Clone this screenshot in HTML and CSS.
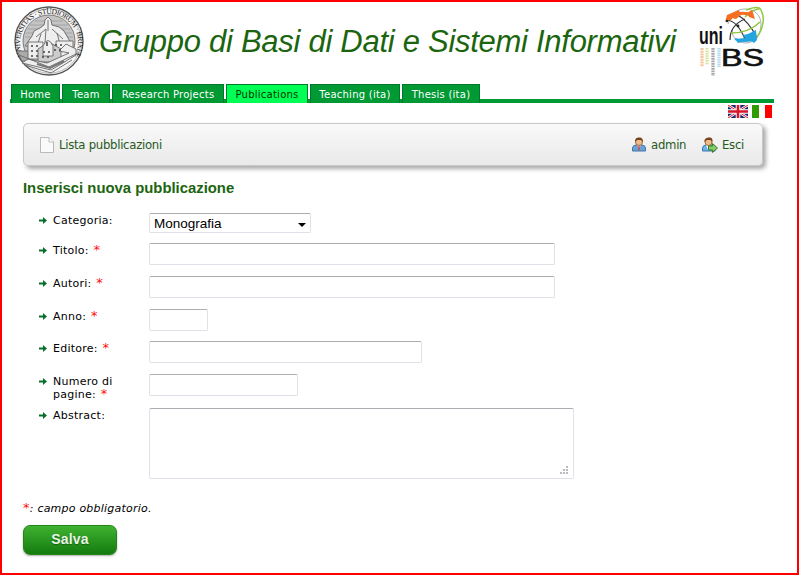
FILE: index.html
```html
<!DOCTYPE html>
<html lang="it">
<head>
<meta charset="utf-8">
<title>Gruppo di Basi di Dati e Sistemi Informativi</title>
<link rel="stylesheet" href="styles.css">
</head>
<body>
<div class="page">
  <header class="header">
    <svg class="seal" viewBox="0 0 70 70">
      <defs><path id="ring" d="M10 51.5A29 29 0 1 1 60 51.5"/></defs>
      <circle cx="35" cy="35" r="34" fill="#f4f4f4" stroke="#555" stroke-width="1.3"/>
      <circle cx="35" cy="35" r="32.2" fill="none" stroke="#999" stroke-width=".6"/>
      <circle cx="35" cy="35" r="26" fill="#c4c4c4" stroke="#666" stroke-width=".8"/>
      <g stroke="#999" stroke-width=".7"><path d="M21 15h28M16 19h38M14 23h42M12 27h46M11 31h48"/></g>
      <text class="seal-text"><textPath href="#ring" startOffset="2" textLength="118">UNIVERSITAS · STUDIORUM · BRIXIÆ</textPath></text>
      <g stroke="#666" stroke-width=".9" fill="#eee">
        <path d="M11 40L18 30L20 25L26 22L30 19L31 14L34 11L37 14L38 19L45 21L50 25L58 39Z"/>
        <path d="M22 31L32 23L31 37M38 23L49 33M34 14V25M27 28L23 40M43 27L46 38" fill="none"/>
        <path d="M3 45H19V55H8Z" fill="#aaa"/>
        <path d="M14 36h15v17H14zM42 35h17v16H42z"/>
        <path d="M24 43L35 36L47 43V56H24Z" fill="#ccc"/>
        <path d="M29 40Q34 29 39 40V50H29Z"/>
        <path d="M45 45L52 38L62 43V49L37 64L8 57L14 53L33 57L55 47Z"/>
        <path d="M5 49L35 61L64 47M11 59L37 67L58 54" fill="none"/>
        <path d="M17 40h2m3 0h2m-7 5h2m3 0h2m-7 5h2m3 0h2m5-4h2m3 0h2m-8 5h2m3 0h2m6-12h2m3 0h2m-8 5h2m3 0h2M33 36v4" stroke="#444" stroke-width="1.5"/>
      </g>
      <path d="M23 58L36 62L50 55" fill="none" stroke="#777" stroke-width="2"/>
    </svg>
    <h1 class="title">Gruppo di Basi di Dati e Sistemi Informativi</h1>
    <svg class="unibs" viewBox="0 0 68 74">
      <g fill="none">
        <path d="M29 19C31 9 38 4 46 4C56 4 62 11 62 19C62 29 56 38 47 38C38 38 33 32 33 25" stroke="#999" stroke-width=".8"/>
        <path d="M27 15Q38 15 46 34M46 14Q31 20 31 35M37 9Q50 16 58 33" stroke="#333" stroke-width="1.2"/>
        <path d="M32 28Q50 28 61 17M47 5Q60 0 62 5Q66 13 63 22Q61 30 54 36M46 12Q52 5 60 4" stroke="#91c83e" stroke-width="1.5"/>
        <path d="M30 15Q37 5 54 10" stroke="#f36f21" stroke-width="3"/>
        <path d="M36 34Q46 38 57 34" stroke="#24a5df" stroke-width="2"/>
      </g>
      <path d="M26 17L28 10L35 7L40 5L42 10L37 14L33 13ZM48 8L53 5L56 14L50 12Z" fill="#f36f21"/>
      <path d="M44 30L49 29L57 25L58 35L55 38L51 35L39 38L36 34L46 33Z" fill="#24a5df"/>
      <g fill="#222"><circle cx="28" cy="16" r="1.2"/><circle cx="39" cy="21" r="1.4"/></g>
      <text class="uni" x="0" y="39" textLength="24" lengthAdjust="spacingAndGlyphs">uni</text>
      <text class="bs" x="22" y="61" textLength="43" lengthAdjust="spacingAndGlyphs">BS</text>
      <g class="bars" fill="none" stroke-width="3.3">
        <path d="M3 43V62" stroke="#f5bd94" stroke-dasharray="2 .7"/><path d="M8 43V60" stroke="#d5df91" stroke-dasharray="1.6 .8"/><path d="M14 43V71" stroke="#999" stroke-dasharray="1.7 .8"/><path d="M20 43V62" stroke="#a4d7ed" stroke-dasharray="1.5 .7"/>
      </g>
    </svg>
  </header>
  <nav class="tabs">
    <a class="tab home">Home</a><a class="tab team">Team</a><a class="tab research">Research Projects</a><a class="tab active pubs">Publications</a><a class="tab teaching">Teaching (ita)</a><a class="tab thesis">Thesis (ita)</a>
  </nav>
  <div class="flags">
    <svg width="20" height="13" viewBox="0 0 20 13"><path fill="#17276c" d="M0 0h20v13H0z"/><path d="M0 0L20 13M20 0L0 13" stroke="#fff" stroke-width="2.6"/><path d="M0 0L20 13M20 0L0 13" stroke="#d5162c"/><path d="M10 0V13M0 6.5H20" stroke="#fff" stroke-width="4.6"/><path d="M10 0V13M0 6.5H20" stroke="#d5162c" stroke-width="2.6"/></svg>
    <svg width="20" height="13" viewBox="0 0 20 13"><path fill="#fff" d="M0 0h20v13H0z"/><path fill="#309a00" d="M0 0h7v13H0z"/><path fill="#f00" d="M13 0h7v13h-7z"/></svg>
  </div>
  <div class="toolbar">
    <a class="tool list"><svg width="16" height="16" viewBox="0 0 16 16"><path d="M1.5.5H10L14.5 5V15.5H1.5Z" fill="#fafafa" stroke="#b9b9b9"/><path d="M10 .5V5H14.5" fill="#fff" stroke="#b9b9b9"/></svg><span>Lista pubblicazioni</span></a>
    <a class="tool admin"><svg width="16" height="16" viewBox="0 0 16 16"><path d="M1.5 14V11Q2 8 5 8H11Q14 8 14.5 11V14Z" fill="#6da2d5" stroke="#4273a8"/><path d="M6 8L8 11L10 8" fill="#fff"/><path d="M8 9V13" stroke="#c84344" stroke-width="1.4"/><circle cx="8" cy="5" r="3.5" fill="#edbb8b" stroke="#a46b38"/><path d="M4 5V3Q5 0 8 .5Q12 0 12 5L10 3H6Z" fill="#764218"/></svg><span>admin</span></a>
    <a class="tool exit"><svg width="16" height="16" viewBox="0 0 16 16"><path d="M.5 14V11Q1 8 4 8H10Q12 8 13 11V14Z" fill="#6eb2ef" stroke="#3977af"/><path d="M4 8L6 13L8 8" fill="#fff"/><circle cx="6.5" cy="5" r="3.5" fill="#edbb8b" stroke="#a46b38"/><path d="M2.5 5V3Q4 0 7 .5Q11 0 10.5 5L8.5 3H5Z" fill="#764218"/><path d="M6.5 9H10.5V6.5L15.5 11L10.5 15.5V13H6.5Z" fill="#86c967" stroke="#397c2a"/></svg><span>Esci</span></a>
  </div>
  <main class="content">
    <h2 class="heading">Inserisci nuova pubblicazione</h2>
    <form class="form">
      <div class="row category"><i class="arrow"></i><label>Categoria:</label><div class="field select"><span>Monografia</span><i></i></div></div>
      <div class="row"><i class="arrow"></i><label>Titolo: <b>*</b></label><div class="field wide"></div></div>
      <div class="row"><i class="arrow"></i><label>Autori: <b>*</b></label><div class="field wide"></div></div>
      <div class="row year"><i class="arrow"></i><label>Anno: <b>*</b></label><div class="field short"></div></div>
      <div class="row"><i class="arrow"></i><label>Editore: <b>*</b></label><div class="field medium"></div></div>
      <div class="row number"><i class="arrow"></i><label>Numero di<br>pagine: <b>*</b></label><div class="field pages"></div></div>
      <div class="row abstract"><i class="arrow"></i><label>Abstract:</label><div class="field area"><svg width="8" height="8" viewBox="0 0 8 8" fill="#bbb"><path d="M6 0h2v2H6zM3 3h2v2H3zM6 3h2v2H6zM0 6h2v2H0zM3 6h2v2H3zM6 6h2v2H6z"/></svg></div></div>
    </form>
    <p class="note"><b>*</b>: campo obbligatorio.</p>
    <button class="save" type="button">Salva</button>
  </main>
</div>
</body>
</html>
```
FILE: styles.css
```css
* { box-sizing: border-box; }
body { margin: 0; background: #fff; font: 11px/13px Verdana, "DejaVu Sans", sans-serif; color: #000; }
.page { width: 799px; height: 575px; border: 2px solid #f00; overflow: hidden; }
.header { display: flex; height: 82px; padding-left: 12px; }
.seal { width: 70px; height: 70px; margin-top: 4px; flex: none; }
.seal-text { font: 7.5px "Liberation Serif", serif; fill: #222; }
.title { margin: 20px 0 0 15px; width: 600px; font: italic 31px/40px "Liberation Sans", Arial, sans-serif; color: #1b650f; white-space: nowrap; letter-spacing: -.28px; }
.unibs { width: 68px; height: 74px; margin-top: 3px; flex: none; overflow: visible; }
.uni { font: bold 23px "Liberation Sans", sans-serif; fill: #111; }
.bs { font: 23px "Liberation Sans", sans-serif; fill: #111; stroke: #111; stroke-width: .6px; }
.bars { opacity: .85; }
.tabs { display: flex; gap: 2px; width: 764px; height: 19px; margin-left: 8px; padding-left: 1px; background: linear-gradient(#fff 15px, #093 15px); }
.tab { height: 19px; border: 1px solid #00782a; border-bottom: 0; background: #093; color: #fff; text-align: center; font-size: 10px; line-height: 20px; letter-spacing: .25px; white-space: nowrap; }
.tab.active { color: #030; background: #0f5; }
.home { width: 49px; } .team { width: 48px; } .research { width: 112px; }
.pubs { width: 82px; } .teaching { width: 90px; } .thesis { width: 78px; }
.flags { display: flex; gap: 4px; margin: 2px 0 0 726px; height: 18px; }
.toolbar { display: flex; align-items: center; width: 740px; height: 43px; margin-left: 21px; padding-left: 15px; border: 1px solid #c9c9c9; border-radius: 5px; background: linear-gradient(#f9f9f9, #e9e9e9); box-shadow: 3px 3px 4px #aaa; font-size: 11.7px; letter-spacing: -.28px; color: #285a1d; }
.tool { display: flex; align-items: center; gap: 4px; white-space: nowrap; }
.tool span { padding-top: 2px; }
.admin { margin-left: auto; width: 71px; }
.exit { width: 60px; }
.content { padding-left: 21px; }
.heading { margin: 14px 0 16px; font: bold 14.85px/17px "Liberation Sans", Arial, sans-serif; color: #1b650f; white-space: nowrap; }
.row { display: flex; height: 33px; padding-left: 16px; }
.row.category { height: 30px; } .row.year { height: 32px; } .row.number { height: 34px; } .row.abstract { height: 71px; }
.arrow { width: 8px; height: 7px; margin: 4px 6px 0 0; background: #087029; clip-path: polygon(0 36%, 50% 36%, 50% 0, 100% 50%, 50% 100%, 50% 64%, 0 64%); }
label { width: 96px; padding-top: 1px; white-space: nowrap; letter-spacing: .25px; }
b { color: #ff1010; font-size: 13px; line-height: 1px; font-weight: normal; margin-left: 1px; }
.field { height: 22px; border: 1px solid #dfe0e8; border-top-color: #abadb3; border-radius: 2px; }
.wide { width: 406px; } .short { width: 59px; } .medium { width: 273px; } .pages { width: 149px; }
.select { display: flex; align-items: center; justify-content: space-between; width: 162px; height: 20px; padding: 2px 4px 0; font: 13.5px/18px "Liberation Sans", Arial, sans-serif; }
.select i { border: 4px solid transparent; border-top-color: #000; border-bottom: 0; margin-top: 1px; }
.area { width: 425px; height: 71px; display: flex; align-items: flex-end; justify-content: flex-end; padding: 0 5px 4px 0; }
.note { margin: 23px 0 10px; font-style: italic; letter-spacing: .22px; }
.note b { margin: 0; }
.save { display: block; width: 94px; height: 30px; padding: 0 0 2px; border: 1px solid #258318; border-radius: 7px; background: linear-gradient(#3fb230, #147b10); color: #e8f5e5; font: bold 14px/20px "Liberation Sans", Arial, sans-serif; letter-spacing: .2px; box-shadow: 0 1px 2px #aaa; text-shadow: 0 1px 1px #176210; }
```
